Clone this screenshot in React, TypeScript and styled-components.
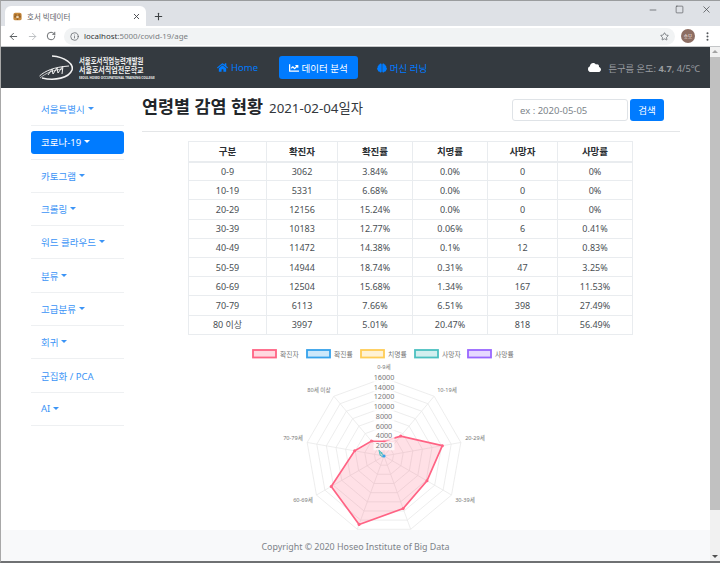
import React from "react";
import styled, { createGlobalStyle } from "styled-components";
import { FaBrain, FaChartLine, FaCloud, FaHome } from "react-icons/fa";
import { ArrowLeft, ArrowRight, Info, Minus, MoreVertical, Plus, RotateCw, Square, Star, X } from "lucide-react";

const Global = createGlobalStyle`
  html, body { margin: 0; padding: 0; overflow: hidden; background: #fff; }
  * { box-sizing: border-box; }
  body { font-family: "Noto Sans", "Noto Sans CJK KR", sans-serif; color: #212529; }
`;

const Win = styled.div`
  width: 720px; height: 563px; display: flex; flex-direction: column; overflow: hidden;
  border-top: 1px solid #9a9c9e; border-left: 1px solid #a8a8a8; border-bottom: 2px solid #6f7173;
`;
const TabStrip = styled.div`
  height: 25px; background: #dee1e6; display: flex; align-items: flex-end; padding-left: 4px; color: #3c4043; flex: none;
`;
const Tab = styled.div`
  width: 141px; height: 20px; background: #fff; border-radius: 6px 6px 0 0; display: flex; align-items: center;
  padding: 0 5px 0 8px; gap: 5px; font-size: 7.5px; color: #5f6368; margin-right: 7px;
`;
const TabTitle = styled.span` flex: 1; white-space: nowrap; `;
const NewTab = styled.div` height: 20px; display: flex; align-items: center; `;
const WinControls = styled.div`
  margin-left: auto; align-self: center; display: flex; align-items: center; gap: 17px; padding: 0 8px 8px 0; color: #3f4144;
`;
const ToolBar = styled.div`
  height: 21px; flex: none; background: #fff; display: flex; align-items: center; padding-left: 7px; gap: 8px; color: #505458;
  border-bottom: 1px solid #c4c6c8;
`;
const Address = styled.div`
  width: 611px; height: 17px; background: #f1f3f4; border-radius: 9px; display: flex; align-items: center;
  padding: 0 6px 0 6px; gap: 5px; font-size: 7.9px; color: #7b7f83;
`;
const Host = styled.span` color: #303336; `;
const Url = styled.span` flex: 1; `;
const Avatar = styled.div`
  width: 14px; height: 14px; border-radius: 50%; background: #8d6e63; color: #f3e9e4; font-size: 4.5px; display: flex; align-items: center; justify-content: center; margin-left: -2px; flex: none;
`;
const Viewport = styled.div` flex: 1; min-height: 0; display: flex; `;
const Page = styled.div` flex: 1; min-width: 0; display: flex; flex-direction: column; `;
const Scrollbar = styled.div`
  width: 10px; background: #f1f1f1; flex: none; display: flex; flex-direction: column; align-items: center; padding-top: 3px;
`;
const ArrowUp = styled.div` width: 0; height: 0; border: 3px solid transparent; border-top: 0; border-bottom: 3px solid #a3a3a3; `;
const ArrowDown = styled.div` width: 0; height: 0; border: 3px solid transparent; border-bottom: 0; border-top: 3px solid #505050; margin-top: auto; margin-bottom: 3px; `;
const Thumb = styled.div` width: 100%; height: 453px; background: #c1c1c1; margin-top: 4px; `;

const NavBar = styled.nav`
  height: 41px; flex: none; background: #343a40; display: flex; align-items: center; padding-left: 38px;
`;
const Logo = styled.div` width: 112px; display: flex; align-items: center; gap: 6px; color: #f2f2f2; margin-right: 66px; flex: none; `;
const LogoText = styled.div` width: 70px; flex: none; line-height: 1; white-space: nowrap; padding-top: 2px; `;
const LogoLine = styled.span<{ $size: number; $scale?: number; $mt?: number }>`
  display: block; font-size: ${p => p.$size}px; font-weight: 700; margin-top: ${p => p.$mt ?? 0}px;
  transform: scaleX(${p => p.$scale ?? 1}); transform-origin: left center;
`;
const NavLink = styled.a<{ $active?: boolean }>`
  display: inline-flex; align-items: center; gap: 3px; height: 23px; border-radius: 3px; font-size: 9.5px; text-decoration: none;
  color: ${p => (p.$active ? "#fff" : "#007bff")};
  background: ${p => (p.$active ? "#007bff" : "transparent")};
  padding: 0 ${p => (p.$active ? 10 : 0)}px;
  margin-right: ${p => (p.$active ? 19 : 20.5)}px;
  white-space: nowrap;
`;
const Weather = styled.div`
  margin-left: auto; display: flex; align-items: center; gap: 7px; font-size: 9.3px; color: #9a9da0; padding-right: 10px; white-space: nowrap;
`;
const WeatherIcon = styled.span` color: #fff; display: flex; `;

const Main = styled.main` flex: 1; min-height: 0; overflow: hidden; display: flex; padding-left: 30px; `;
const Side = styled.aside` width: 93px; flex: none; padding-top: 5px; display: flex; flex-direction: column; `;
const SideRow = styled.div`
  height: 33.3px; border-bottom: 1px solid #eef0f2; padding: 5px 0; display: flex; flex: none;
`;
const SideLink = styled.a<{ $active?: boolean }>`
  flex: 1; display: flex; align-items: center; gap: 3px; padding: 0 10px; font-size: 9.5px; border-radius: 3px; white-space: nowrap;
  color: ${p => (p.$active ? "#fff" : "#3b94f6")};
  background: ${p => (p.$active ? "#007bff" : "transparent")};
`;
const Caret = styled.span`
  width: 0; height: 0; border: 3px solid transparent; border-bottom: 0; border-top: 3px solid currentColor; margin-top: -1px;
`;
const Content = styled.div` margin-left: 18px; width: 538px; flex: none; display: flex; flex-direction: column; `;
const Head = styled.div`
  height: 44px; flex: none; display: flex; align-items: flex-start; border-bottom: 1px solid #e4e6e8; padding-top: 11px;
`;
const Title = styled.h1` margin: -3px 0 0; font-size: 17.4px; font-weight: 700; line-height: 20px; white-space: nowrap; color: #212529; `;
const DateText = styled.span` font-size: 13.3px; font-weight: 400; margin-left: 6px; color: #33383d; `;
const Search = styled.form` margin-left: auto; margin-right: 16px; display: flex; gap: 2px; `;
const Field = styled.div`
  width: 116px; height: 22px; border: 1px solid #dfe3e7; border-radius: 3px; font-size: 9.5px; color: #7d848a; display: flex; align-items: center; padding-left: 7px;
`;
const SearchBtn = styled.div`
  width: 34px; height: 22px; background: #007bff; color: #fff; border-radius: 3px; font-size: 9.5px; display: flex; align-items: center; justify-content: center;
`;
const Table = styled.table`
  border-collapse: collapse; table-layout: fixed; width: 444px; margin: 9px 0 0 46px; font-size: 9px; text-align: center; color: #4a4f54; flex: none;
`;
const Th = styled.th`
  height: 20px; border: 1px solid #e9ecef; border-bottom: 2px solid #e9ecef; font-size: 9.5px; font-weight: 700; padding: 0; color: #2b2f33;
`;
const Td = styled.td` height: 19.2px; border: 1px solid #e9ecef; padding: 0; `;
const Chart = styled.svg` display: block; flex: none; margin: 10px 0 0 46px; `;
const Footer = styled.footer`
  height: 31px; flex: none; background: #f8f9fa; color: #7c8288; font-size: 8.9px; display: flex; align-items: center; justify-content: center; padding-top: 2px;
`;

const sideItems: [string, boolean, boolean?][] = [
  ["서울특별시", true], ["코로나-19", true, true], ["카토그램", true], ["크롤링", true], ["워드 클라우드", true],
  ["분류", true], ["고급분류", true], ["회귀", true], ["군집화 / PCA", false], ["AI", true],
];
const cols = [78, 71, 75, 75, 70, 75];
const header = ["구분", "확진자", "확진률", "치명률", "사망자", "사망률"];
const rows = [
  ["0-9", "3062", "3.84%", "0.0%", "0", "0%"],
  ["10-19", "5331", "6.68%", "0.0%", "0", "0%"],
  ["20-29", "12156", "15.24%", "0.0%", "0", "0%"],
  ["30-39", "10183", "12.77%", "0.06%", "6", "0.41%"],
  ["40-49", "11472", "14.38%", "0.1%", "12", "0.83%"],
  ["50-59", "14944", "18.74%", "0.31%", "47", "3.25%"],
  ["60-69", "12504", "15.68%", "1.34%", "167", "11.53%"],
  ["70-79", "6113", "7.66%", "6.51%", "398", "27.49%"],
  ["80 이상", "3997", "5.01%", "20.47%", "818", "56.49%"],
];

const CX = 196, CY = 111, R = 78, MAX = 16000;
const pt = (i: number, v: number) => {
  const a = (i * 40 * Math.PI) / 180;
  const r = (v / MAX) * R;
  return [CX + r * Math.sin(a), CY - r * Math.cos(a)] as const;
};
const ring = (v: number) => Array.from({ length: 9 }, (_, i) => pt(i, v).join(",")).join(" ");
const cases = rows.map(r => Number(r[1]));
const deaths = rows.map(r => Number(r[4]));
const legend: [string, string, string, number][] = [
  ["확진자", "#ff6384", "rgba(255,99,132,.25)", 64],
  ["확진률", "#36a2eb", "rgba(54,162,235,.25)", 118],
  ["치명률", "#ffcd56", "rgba(255,205,86,.25)", 172],
  ["사망자", "#4bc0c0", "rgba(75,192,192,.25)", 226],
  ["사망률", "#9966ff", "rgba(153,102,255,.25)", 279],
];
const labels: [string, number, number][] = [
  ["0-9세", 196, 24], ["10-19세", 259, 47], ["20-29세", 287, 95], ["30-39세", 277, 157],
  ["60-69세", 115, 157], ["70-79세", 105, 95], ["80세 이상", 131, 47],
];

function RadarChart() {
  return (
    <Chart width={444} height={190} viewBox="0 0 444 190" fontFamily='"Noto Sans","Noto Sans CJK KR",sans-serif'>
      {legend.map(([name, line, fill, x]) => (
        <g key={name}>
          <rect x={x + 1} y={5} width={23} height={7.5} fill={fill} stroke={line} strokeWidth={1.8} />
          <text x={x + 28} y={11.5} fontSize={6.8} fill="#777">{name}</text>
        </g>
      ))}
      {Array.from({ length: 8 }, (_, k) => (
        <polygon key={k} points={ring((k + 1) * 2000)} fill="none" stroke="#e8e8e8" strokeWidth={0.8} />
      ))}
      {Array.from({ length: 9 }, (_, i) => {
        const [x, y] = pt(i, MAX);
        return <line key={i} x1={CX} y1={CY} x2={x} y2={y} stroke="#e8e8e8" strokeWidth={0.8} />;
      })}
      <polygon points={cases.map((v, i) => pt(i, v).join(",")).join(" ")} fill="rgba(255,99,132,.2)" stroke="#ff6384" strokeWidth={1.7} />
      {cases.map((v, i) => {
        const [x, y] = pt(i, v);
        return <circle key={i} cx={x} cy={y} r={1.5} fill="#ff6384" />;
      })}
      <polygon points={deaths.map((v, i) => pt(i, v * 2).join(",")).join(" ")} fill="rgba(75,192,192,.3)" stroke="#4bc0c0" strokeWidth={1} />
      <circle cx={CX - 2.5} cy={CY - 3} r={1} fill="#4bc0c0" />
      <circle cx={CX} cy={CY} r={1.6} fill="#36a2eb" />
      {Array.from({ length: 8 }, (_, k) => {
        const v = (k + 1) * 2000;
        const y = CY - (v / MAX) * R;
        return (
          <g key={v}>
            <rect x={CX - 10.5} y={y - 4} width={21} height={8} fill="rgba(255,255,255,.75)" />
            <text x={CX} y={y + 1.8} fontSize={7.2} textAnchor="middle" fill="#777">{v}</text>
          </g>
        );
      })}
      {labels.map(([t, x, y]) => (
        <text key={t} x={x} y={y} fontSize={5.6} textAnchor="middle" fill="#777">{t}</text>
      ))}
    </Chart>
  );
}

const Tiger = () => (
  <svg width="9" height="9" viewBox="0 0 12 12">
    <rect x="0.5" y="1" width="11" height="10" rx="2.5" fill="#c98a3c" />
    <path d="M2 4h3M7 4h3M1.5 6.5h3M7.5 6.5h3M5 9.5h2" stroke="#5b3a1a" strokeWidth="1" />
    <rect x="4.5" y="5.5" width="3" height="2.5" fill="#f0dcc0" />
  </svg>
);

const LogoMark = () => (
  <svg width="34" height="26" viewBox="0 0 34 26" fill="none" stroke="#f2f2f2" style={{ flex: "none" }}>
    <path d="M13 1C26 2 35 9 33 15C30 23 16 26 3 23" strokeWidth="1.6" />
    <path d="M0.5 21C6 16 15 12 30 11" strokeWidth="1" />
    <path d="M1 23C7 18 14 15 24 14" strokeWidth="0.7" />
    <path d="M9 20l4-6 1 5 4-6 1 5 5-7-1 8" strokeWidth="1" />
  </svg>
);

export default function App() {
  return (
    <>
      <Global />
      <Win>
        <TabStrip>
          <Tab>
            <Tiger />
            <TabTitle>호서 빅데이터</TabTitle>
            <X size={9} color="#45484c" strokeWidth={2.5} />
          </Tab>
          <NewTab><Plus size={11} color="#3c4043" strokeWidth={2.4} /></NewTab>
          <WinControls>
            <Minus size={10} strokeWidth={1.5} />
            <Square size={9} strokeWidth={1.5} />
            <X size={11} strokeWidth={1.5} />
          </WinControls>
        </TabStrip>
        <ToolBar>
          <ArrowLeft size={11} strokeWidth={2} />
          <ArrowRight size={11} strokeWidth={2} color="#b9bcbf" />
          <RotateCw size={10} strokeWidth={2} />
          <Address>
            <Info size={9} strokeWidth={2} color="#5f6368" />
            <Url><Host>localhost</Host>:5000/covid-19/age</Url>
            <Star size={9} strokeWidth={2} color="#5f6368" />
          </Address>
          <Avatar>승모</Avatar>
          <MoreVertical size={11} strokeWidth={2.4} style={{ marginLeft: -1 }} />
        </ToolBar>
        <Viewport>
          <Page>
            <NavBar>
              <Logo>
                <LogoMark />
                <LogoText>
                  <LogoLine $size={8.4} $scale={0.76}>서울호서직업능력개발원</LogoLine>
                  <LogoLine $size={7.8} $scale={0.9} $mt={2}>서울호서직업전문학교</LogoLine>
                  <LogoLine $size={3.2} $scale={0.95} $mt={2}>SEOUL HOSEO OCCUPATIONAL TRAINING COLLEGE</LogoLine>
                </LogoText>
              </Logo>
              <NavLink><FaHome size={11} /> Home</NavLink>
              <NavLink $active><FaChartLine size={10} /> 데이터 분석</NavLink>
              <NavLink><FaBrain size={10} /> 머신 러닝</NavLink>
              <Weather>
                <WeatherIcon><FaCloud size={13} /></WeatherIcon>
                <span>튼구름 온도: <b>4.7</b>, 4/5℃</span>
              </Weather>
            </NavBar>
            <Main>
              <Side>
                {sideItems.map(([t, caret, active]) => (
                  <SideRow key={t}>
                    <SideLink $active={active}>{t}{caret && <Caret />}</SideLink>
                  </SideRow>
                ))}
              </Side>
              <Content>
                <Head>
                  <Title>연령별 감염 현황<DateText>2021-02-04일자</DateText></Title>
                  <Search>
                    <Field>ex : 2020-05-05</Field>
                    <SearchBtn>검색</SearchBtn>
                  </Search>
                </Head>
                <Table>
                  <colgroup>{cols.map((w, i) => <col key={i} width={w} />)}</colgroup>
                  <thead><tr>{header.map(h => <Th key={h}>{h}</Th>)}</tr></thead>
                  <tbody>
                    {rows.map(r => <tr key={r[0]}>{r.map((c, i) => <Td key={i}>{c}</Td>)}</tr>)}
                  </tbody>
                </Table>
                <RadarChart />
              </Content>
            </Main>
            <Footer>Copyright © 2020 Hoseo Institute of Big Data</Footer>
          </Page>
          <Scrollbar>
            <ArrowUp />
            <Thumb />
            <ArrowDown />
          </Scrollbar>
        </Viewport>
      </Win>
    </>
  );
}
